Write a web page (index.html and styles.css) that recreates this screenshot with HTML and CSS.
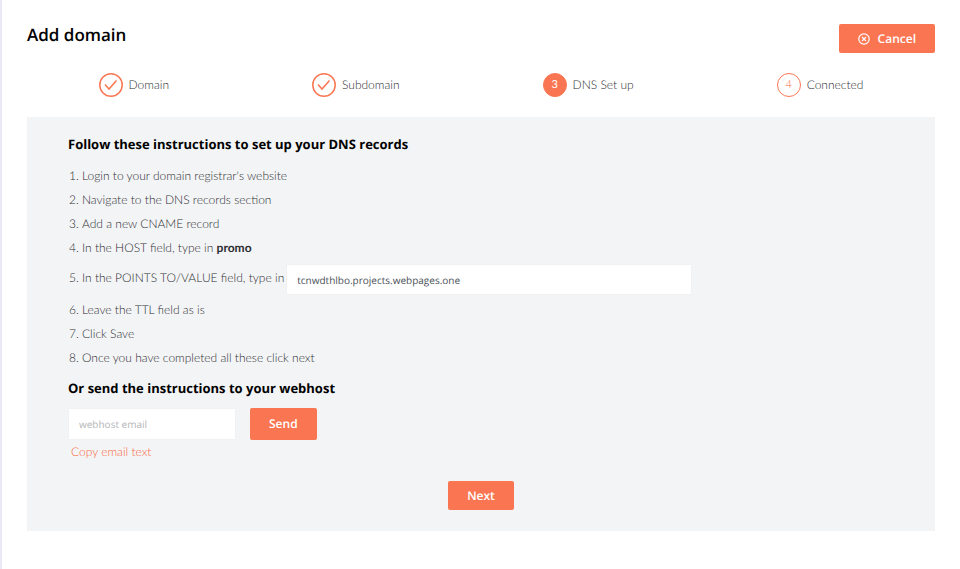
FILE: index.html
```html
<!DOCTYPE html>
<html lang="en">
<head>
<meta charset="utf-8">
<meta name="viewport" content="width=device-width, initial-scale=1">
<title>Add domain</title>
<link rel="stylesheet" href="styles.css">
</head>
<body>
<main class="page">
  <header class="header">
    <h1 class="title">Add domain</h1>
    <button class="button" type="button">
      <svg class="cancel-icon" viewBox="0 0 12 12" aria-hidden="true"><circle cx="6" cy="6" r="5.2"/><path d="M4 4l4 4M8 4l-4 4"/></svg>
      Cancel
    </button>
  </header>
  <ol class="steps">
    <li class="step"><svg class="check" viewBox="0 0 24 24" aria-hidden="true"><circle cx="12" cy="12" r="11.2"/><path d="M6 11.500l4 4.500 7.500-8.500"/></svg>Domain</li>
    <li class="step"><svg class="check" viewBox="0 0 24 24" aria-hidden="true"><circle cx="12" cy="12" r="11.2"/><path d="M6 11.500l4 4.500 7.500-8.500"/></svg>Subdomain</li>
    <li class="step" aria-current="step"><span class="number number-current">3</span>DNS Set up</li>
    <li class="step"><span class="number">4</span>Connected</li>
  </ol>
  <section class="panel">
    <h2 class="heading">Follow these instructions to set up your DNS records</h2>
    <ol class="instructions">
      <li>Login to your domain registrar's website</li>
      <li>Navigate to the DNS records section</li>
      <li>Add a new CNAME record</li>
      <li>In the HOST field, type in <strong>promo</strong></li>
      <li class="with-field"><label for="target">In the POINTS TO/VALUE field, type in</label><input class="input target" id="target" type="text" value="tcnwdthlbo.projects.webpages.one" readonly></li>
      <li>Leave the TTL field as is</li>
      <li>Click Save</li>
      <li>Once you have completed all these click next</li>
    </ol>
    <h2 class="heading">Or send the instructions to your webhost</h2>
    <form class="send">
      <input class="input email" type="email" placeholder="webhost email" aria-label="webhost email">
      <button class="button button-send" type="button">Send</button>
    </form>
    <a class="copy" href="#">Copy email text</a>
    <div class="actions"><button class="button" type="button">Next</button></div>
  </section>
</main>
</body>
</html>
```
FILE: styles.css
```css
* { box-sizing: border-box; }

body {
  margin: 0;
  min-height: 100vh;
  border-left: 2px solid #e9e9f5;
  background: #fff;
  color: #2c2d30;
  font: 300 12px/16px Lato, sans-serif;
  text-rendering: geometricPrecision;
}

.page { padding: 24px 25px; }

.header {
  display: flex;
  justify-content: space-between;
  align-items: flex-start;
}

.title {
  margin: 0;
  color: #000;
  font: 600 17px/22px "Open Sans", sans-serif;
}

.button {
  display: inline-flex;
  align-items: center;
  justify-content: center;
  gap: 8px;
  height: 29px;
  padding: 0 19px;
  border: 0;
  border-radius: 2px;
  background: #fa7653;
  color: #fff;
  font: 600 12px/16px "Open Sans", sans-serif;
  text-rendering: inherit;
}

.cancel-icon {
  width: 12px;
  height: 12px;
  fill: none;
  stroke: currentColor;
  stroke-width: 1.2;
}

.steps {
  display: flex;
  justify-content: space-around;
  margin: 20px 0;
  padding: 0;
  list-style: none;
}

.step {
  display: flex;
  align-items: center;
  gap: 6px;
}

.check {
  width: 24px;
  height: 24px;
  fill: none;
  stroke: #fa7653;
  stroke-width: 1.5;
}

.number {
  display: flex;
  align-items: center;
  justify-content: center;
  width: 24px;
  height: 24px;
  border: 1px solid #fa7653;
  border-radius: 50%;
  color: #fa6540;
  font-size: 11px;
}

.number-current {
  background: #fa7653;
  color: #fff;
  font-weight: 400;
}

.panel {
  padding: 18px 41px 21px;
  background: #f3f4f6;
}

.heading {
  margin: 0;
  color: #000;
  font: 700 13px/18px "Open Sans", sans-serif;
}

.instructions {
  margin: 15px 0 13px;
  padding-left: 14px;
}

.instructions li { margin-bottom: 8px; }
.instructions strong { font-weight: 700; }

.instructions .with-field { margin-bottom: 7px; }
.with-field label { margin-right: 2px; }

.input {
  height: 31px;
  padding: 0 10px;
  border: 1px solid #f0f1f3;
  background: #fff;
  color: #495057;
  font: 400 10px/16px "Open Sans", sans-serif;
  text-rendering: inherit;
}

.target {
  width: 50%;
  vertical-align: middle;
}

.send {
  display: flex;
  gap: 14px;
  margin: 11px 0 4px;
}

.email {
  width: 168px;
  height: 32px;
}

.email::placeholder { color: #b5b5b8; }

.button-send { height: 32px; }

.copy {
  margin-left: 3px;
  color: #fa6540;
  text-decoration: none;
}

.actions {
  display: flex;
  justify-content: center;
  margin-top: 21px;
}
```
